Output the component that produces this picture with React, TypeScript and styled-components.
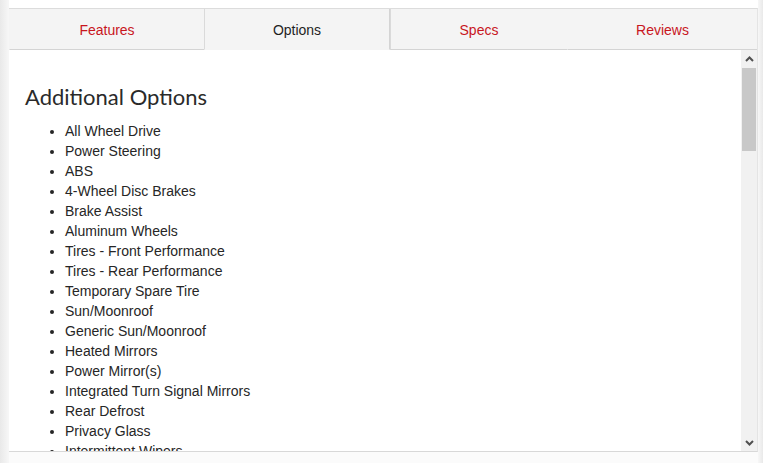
import React from 'react';
import styled, { createGlobalStyle } from 'styled-components';

const GlobalStyle = createGlobalStyle`
  html, body {
    margin: 0;
    padding: 0;
    background: #ffffff;
  }
  body {
    font-family: "Liberation Sans", Arial, sans-serif;
  }
`;

const Page = styled.div`
  display: flex;
  height: 463px;
  overflow: hidden;
`;

const SideShade = styled.div<{ $width: number; $flip?: boolean }>`
  flex: 0 0 ${p => p.$width}px;
  background: linear-gradient(
    ${p => (p.$flip ? 'to left' : 'to right')},
    #e9e9e9,
    #f7f7f7
  );
`;

const Panel = styled.div`
  flex: 1;
  display: flex;
  flex-direction: column;
  min-width: 0;
`;

const TopGap = styled.div`
  flex: 0 0 8px;
  background: #ffffff;
`;

const TabBar = styled.div`
  flex: 0 0 auto;
  display: flex;
  border-top: 1px solid #dcdcdc;
  border-right: 1px solid #e4e4e4;
  height: 41px;
`;

const Tab = styled.button<{ $active?: boolean; $width: number; $leftLine?: boolean }>`
  flex: 0 0 ${p => p.$width}px;
  display: flex;
  align-items: center;
  justify-content: center;
  padding: 1px 0 0;
  margin: 0;
  font-family: "Liberation Sans", Arial, sans-serif;
  font-size: 14px;
  color: ${p => (p.$active ? '#1f1f1f' : '#c8161d')};
  background: #f4f4f4;
  border: none;
  border-bottom: 1px solid ${p => (p.$active ? 'transparent' : '#d4d4d4')};
  border-left: 1px solid ${p => (p.$leftLine || p.$active ? '#dadada' : 'transparent')};
  border-right: ${p => (p.$active ? '1px solid #d4d4d4' : 'none')};
  cursor: pointer;
  &:last-child {
    flex: 1;
  }
`;

const Body = styled.div`
  flex: 0 0 auto;
  height: 401px;
  min-height: 0;
  overflow: hidden;
  display: flex;
  background: #ffffff;
  border-right: 1px solid #e4e4e4;
  border-bottom: 1px solid #d8d8d8;
`;

const Content = styled.div`
  flex: 1;
  overflow: hidden;
  padding: 29px 0 0 16px;
`;

const Heading = styled.h2`
  margin: 0 0 6px;
  font-family: Lato, "Open Sans", sans-serif;
  font-weight: 400;
  font-size: 22px;
  line-height: 36px;
  color: #2a2a2a;
`;

const OptionList = styled.ul`
  margin: 0;
  padding: 0 0 0 40px;
  list-style: disc;
`;

const OptionItem = styled.li`
  font-family: "Liberation Sans", Arial, sans-serif;
  font-size: 14px;
  line-height: 20px;
  color: #262626;
`;

const Scrollbar = styled.div`
  flex: 0 0 16px;
  display: flex;
  flex-direction: column;
  background: #f1f1f1;
`;

const ScrollButton = styled.div`
  flex: 0 0 17px;
  display: flex;
  align-items: center;
  justify-content: center;
  color: #505050;
`;

const Track = styled.div`
  flex: 1;
  display: flex;
  flex-direction: column;
  padding: 0 1px;
`;

const Thumb = styled.div`
  flex: 0 0 83px;
  margin-top: 1px;
  background: #c8c8c8;
`;

const Footer = styled.div`
  flex: 1;
  background: #fbfbfb;
`;

const tabs = [
  { label: 'Features', width: 195 },
  { label: 'Options', width: 186, active: true },
  { label: 'Specs', width: 177, leftLine: true },
  { label: 'Reviews', width: 190 },
];

const options = [
  'All Wheel Drive',
  'Power Steering',
  'ABS',
  '4-Wheel Disc Brakes',
  'Brake Assist',
  'Aluminum Wheels',
  'Tires - Front Performance',
  'Tires - Rear Performance',
  'Temporary Spare Tire',
  'Sun/Moonroof',
  'Generic Sun/Moonroof',
  'Heated Mirrors',
  'Power Mirror(s)',
  'Integrated Turn Signal Mirrors',
  'Rear Defrost',
  'Privacy Glass',
  'Intermittent Wipers',
];

const Chevron = ({ up }: { up?: boolean }) => (
  <svg width="9" height="6" viewBox="0 0 9 6">
    <path
      d={up ? 'M1 5 L4.5 1.5 L8 5' : 'M1 1 L4.5 4.5 L8 1'}
      fill="none"
      stroke="currentColor"
      strokeWidth="2"
    />
  </svg>
);

const App = () => {
  return (
    <>
      <GlobalStyle />
      <Page>
        <SideShade $width={9} />
        <Panel>
          <TopGap />
          <TabBar>
            {tabs.map(tab => (
              <Tab
                key={tab.label}
                $width={tab.width}
                $active={tab.active}
                $leftLine={tab.leftLine}
              >
                {tab.label}
              </Tab>
            ))}
          </TabBar>
          <Body>
            <Content>
              <Heading>Additional Options</Heading>
              <OptionList>
                {options.map(option => (
                  <OptionItem key={option}>{option}</OptionItem>
                ))}
              </OptionList>
            </Content>
            <Scrollbar>
              <ScrollButton>
                <Chevron up />
              </ScrollButton>
              <Track>
                <Thumb />
              </Track>
              <ScrollButton>
                <Chevron />
              </ScrollButton>
            </Scrollbar>
          </Body>
          <Footer />
        </Panel>
        <SideShade $width={5} $flip />
      </Page>
    </>
  );
};

export default App;
